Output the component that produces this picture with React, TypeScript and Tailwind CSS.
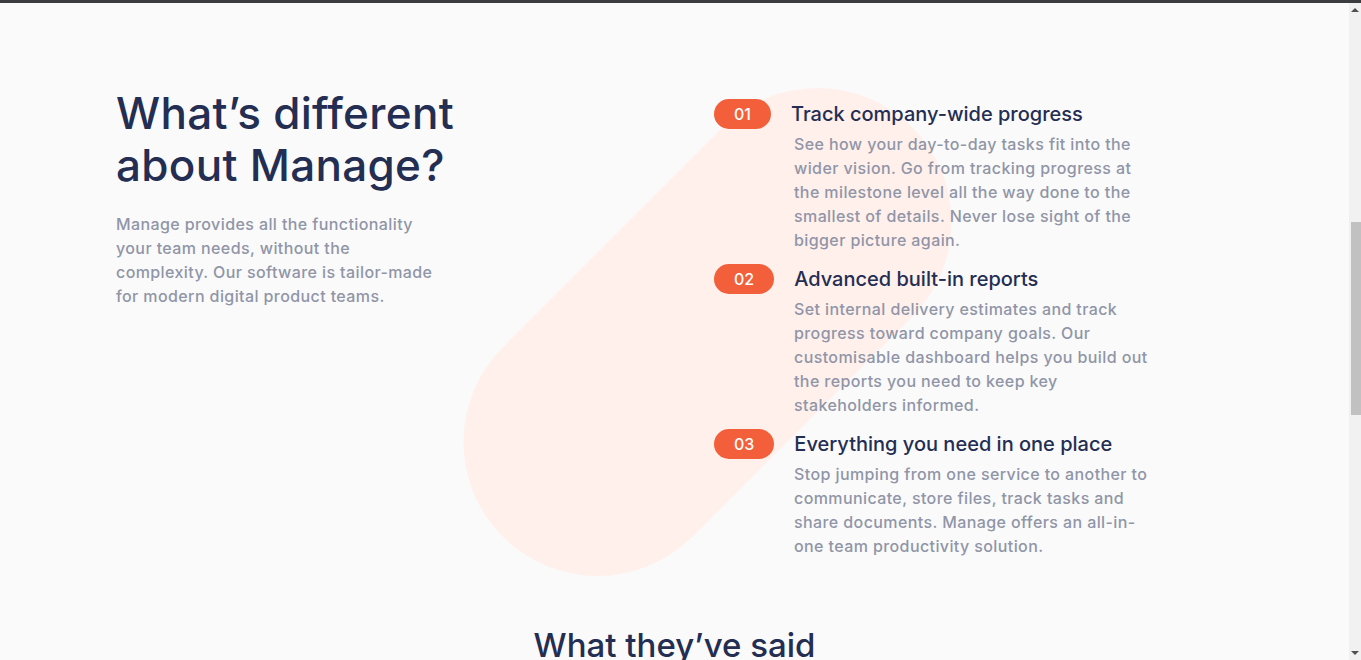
const features = [
  {
    num: '01',
    title: 'Track company-wide progress',
    body: 'See how your day-to-day tasks fit into the wider vision. Go from tracking progress at the milestone level all the way done to the smallest of details. Never lose sight of the bigger picture again.',
  },
  {
    num: '02',
    title: 'Advanced built-in reports',
    body: 'Set internal delivery estimates and track progress toward company goals. Our customisable dashboard helps you build out the reports you need to keep key stakeholders informed.',
  },
  {
    num: '03',
    title: 'Everything you need in one place',
    body: 'Stop jumping from one service to another to communicate, store files, track tasks and share documents. Manage offers an all-in-one team productivity solution.',
  },
];

function Scrollbar() {
  return (
    <div className="flex w-[12px] shrink-0 flex-col bg-[#f1f1f1]">
      <div className="flex h-[14px] items-center justify-center">
        <div className="h-0 w-0 border-x-[4px] border-b-[4px] border-x-transparent border-b-[#505050]" />
      </div>
      <div className="flex-1 pl-[2px] pt-[205px]">
        <div className="h-[193px] w-full bg-[#c1c1c1]" />
      </div>
      <div className="flex h-[14px] items-center justify-center">
        <div className="h-0 w-0 border-x-[4px] border-t-[4px] border-x-transparent border-t-[#505050]" />
      </div>
    </div>
  );
}

export default function App() {
  return (
    <div className="flex h-[660px] flex-col overflow-hidden bg-[#fafafa] font-['Inter',sans-serif]">
      <div className="h-[3px] shrink-0 bg-[#3b3c40]" />
      <div className="flex min-h-0 flex-1">
        <main className="relative flex-1 overflow-hidden">
          {/* decorative pill behind the list */}
          <div className="pointer-events-none absolute left-[418px] top-[195px] h-[268px] w-[579px] -rotate-45 rounded-full bg-[#fff0ec]" />

          <section className="relative flex pl-[116px] pt-[84px]">
            <div className="w-[598px] shrink-0">
              <h2 className="text-[44px] font-medium leading-[52px] tracking-[0.3px] text-[#242d52]">
                What’s different
                <br />
                about Manage?
              </h2>
              <p className="mt-[21px] w-[330px] text-base font-medium leading-6 tracking-[0.4px] text-[#9095a7]">
                Manage provides all the functionality your team needs, without the complexity. Our software is
                tailor-made for modern digital product teams.
              </p>
            </div>

            <div className="flex flex-col gap-[12px] pt-[12px]">
              {features.map((f) => (
                <div key={f.num}>
                  <div className="flex h-[30px] items-center gap-5">
                    <span className="flex h-[30px] items-center rounded-full bg-[#f25f3a] px-5 text-base font-medium text-white">
                      {f.num}
                    </span>
                    <h3 className="text-[20px] font-medium leading-6 text-[#242d52]">{f.title}</h3>
                  </div>
                  <p className="ml-[80px] mt-[3px] w-[356px] text-base font-medium leading-6 tracking-[0.4px] text-[#9095a7]">
                    {f.body}
                  </p>
                </div>
              ))}
            </div>
          </section>

          <section className="relative pt-[67px] text-center">
            <h2 className="text-[33px] font-medium leading-10 text-[#242d52]">What they’ve said</h2>
          </section>
        </main>
        <Scrollbar />
      </div>
    </div>
  );
}
